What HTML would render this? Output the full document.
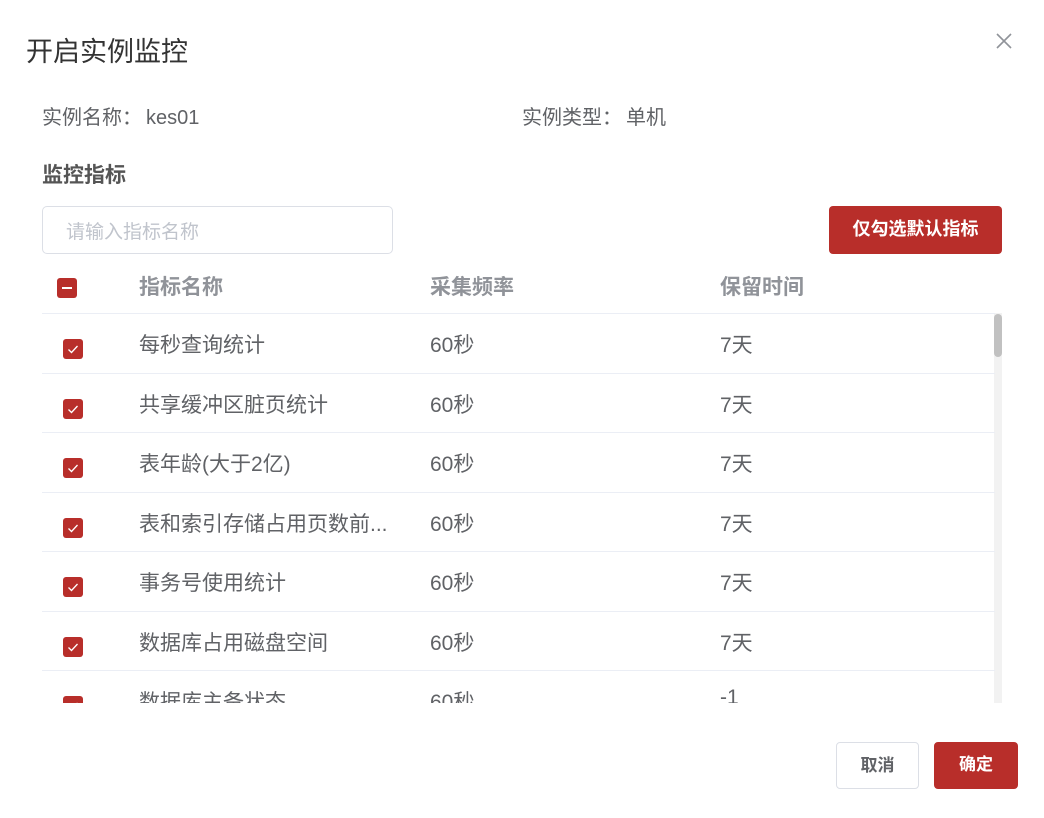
<!DOCTYPE html>
<html><head><meta charset="utf-8"><style>
*{margin:0;padding:0;box-sizing:border-box}
body{width:1044px;height:818px;background:#fff;font-family:"Liberation Sans","Noto Sans CJK SC",sans-serif;position:relative;overflow:hidden;color:#555}
.a{position:absolute}
.title{left:26px;top:30px;font-size:27px;color:#333}
.close{left:994px;top:31px;width:20px;height:20px}
.lbl{font-size:20px;color:#606266;top:101px}
.sec{left:42px;top:159px;font-size:21px;font-weight:bold;color:#555}
.inp{left:42px;top:206px;width:351px;height:48px;border:1px solid #dcdfe6;border-radius:5px;font-size:19px;color:#c0c4cc;padding:10px 0 0 23px}
.btn{border-radius:4px;font-size:18px;font-weight:bold;text-align:center;color:#fff;background:#b82e2a}
.cb{width:20px;height:20px;border-radius:3px;background:#b82e2a}
.th{top:271px;font-size:21px;font-weight:bold;color:#909399}
.row{left:42px;width:953px;height:60px;border-top:1px solid #ebeef5}
.row span{position:absolute;top:15px;font-size:21px;color:#606266}
.clip{left:0;top:313px;width:1044px;height:390px;overflow:hidden}
</style></head><body>
<div class="a title">开启实例监控</div>
<svg class="a close" viewBox="0 0 20 20"><path d="M3 3L17 17M17 3L3 17" stroke="#909399" stroke-width="1.6"/></svg>
<div class="a lbl" style="left:42px">实例名称：<span style="margin-left:4px">kes01</span></div>
<div class="a lbl" style="left:522px">实例类型：<span style="margin-left:4px">单机</span></div>
<div class="a sec">监控指标</div>
<div class="a inp">请输入指标名称</div>
<div class="a btn" style="left:829px;top:206px;width:173px;height:48px;line-height:46px">仅勾选默认指标</div>
<div class="a cb" style="left:57px;top:278px"><div style="position:absolute;left:5px;top:9px;width:10px;height:2px;background:#fff"></div></div>
<div class="a th" style="left:139px">指标名称</div>
<div class="a th" style="left:430px">采集频率</div>
<div class="a th" style="left:720px">保留时间</div>
<div class="a clip">
<div class="a" style="left:994px;top:0;width:8px;height:390px;background:#f2f2f2"></div>
<div class="a" style="left:994px;top:1px;width:8px;height:43px;background:#c1c1c1;border-radius:4px"></div>
</div>
<div class="a clip" id="rows"></div>
<script>
var d=[["每秒查询统计","7天"],["共享缓冲区脏页统计","7天"],["表年龄(大于2亿)","7天"],["表和索引存储占用页数前...","7天"],["事务号使用统计","7天"],["数据库占用磁盘空间","7天"],["数据库主备状态","-1"]];
var h="";d.forEach(function(r,i){var t=i*59.5;h+='<div class="a row" style="top:'+t+'px"><div class="a cb" style="left:21px;top:25px"><svg width="20" height="20" viewBox="0 0 20 20"><path d="M5.5 10.5L8.5 13.5L14.5 7" stroke="#fff" stroke-width="1.3" fill="none"/></svg></div><span style="left:97px">'+r[0]+'</span><span style="left:388px">60秒</span><span style="left:678px">'+r[1]+'</span></div>';});
document.getElementById("rows").innerHTML=h;
</script>
<div class="a" style="left:836px;top:742px;width:83px;height:47px;border:1px solid #dcdfe6;border-radius:4px;font-size:17px;font-weight:bold;color:#606266;text-align:center;line-height:45px">取消</div>
<div class="a btn" style="left:934px;top:742px;width:84px;height:47px;line-height:45px;font-size:17px">确定</div>
</body></html>
